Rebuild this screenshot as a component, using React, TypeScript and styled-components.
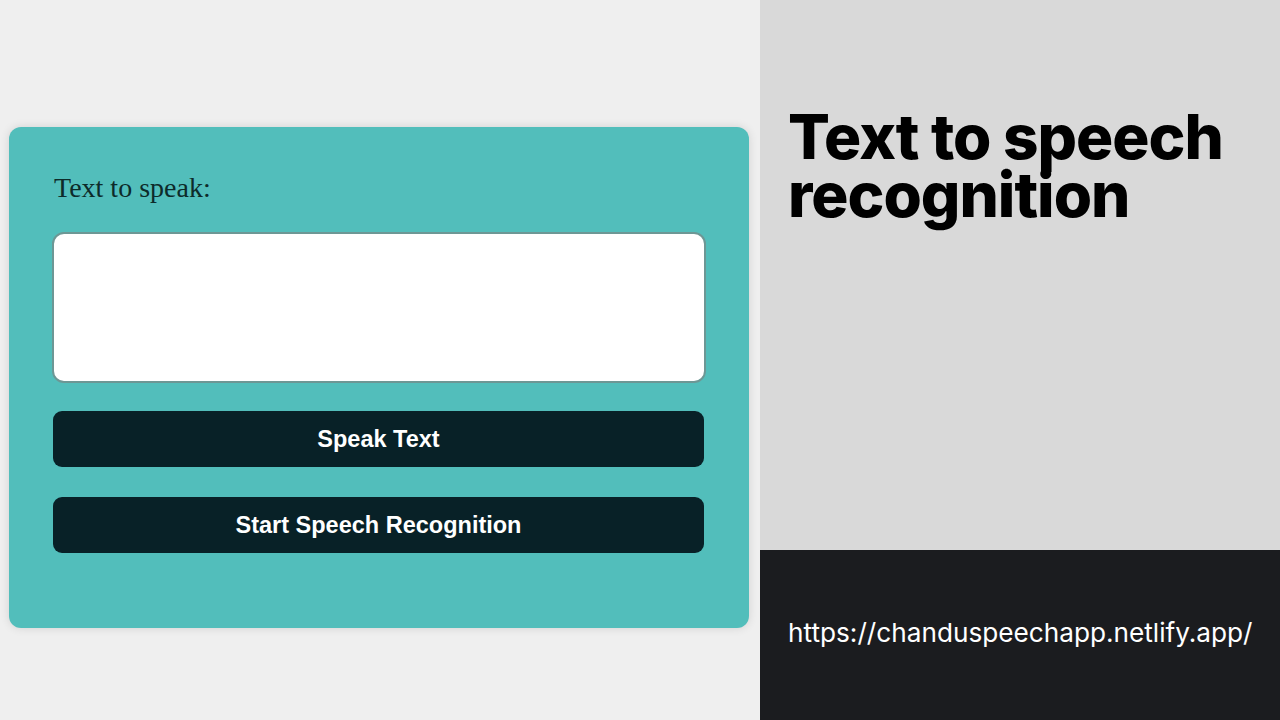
import React from "react";
import styled, { createGlobalStyle } from "styled-components";

const GlobalStyle = createGlobalStyle`
  html, body {
    margin: 0;
    padding: 0;
  }
  body {
    width: 1280px;
    height: 720px;
    overflow: hidden;
  }
`;

const Page = styled.div`
  display: flex;
  width: 1280px;
  height: 720px;
`;

const LeftPane = styled.div`
  width: 760px;
  height: 720px;
  background: #efefef;
  padding: 127px 0 0 9px;
  box-sizing: border-box;
`;

const Card = styled.div`
  width: 740px;
  height: 501px;
  box-sizing: border-box;
  background: #52bebb;
  border-radius: 12px;
  box-shadow: 0 0 10px rgba(0, 0, 0, 0.12);
  padding: 45px 43px 0 43px;
  display: flex;
  flex-direction: column;
`;

const Label = styled.label`
  font-family: "Liberation Serif", "Times New Roman", serif;
  font-size: 28px;
  line-height: 32px;
  color: #0d2b2a;
  padding-left: 2px;
`;

const TextArea = styled.textarea`
  margin-top: 28px;
  width: 654px;
  height: 151px;
  box-sizing: border-box;
  border: 2px solid #6d9795;
  border-radius: 12px;
  background: #ffffff;
  resize: none;
  outline: none;
`;

const Button = styled.button<{ $gap: number }>`
  margin: ${(p) => p.$gap}px 0 0 1px;
  width: 651px;
  height: 56px;
  border: none;
  border-radius: 9px;
  background: #082127;
  color: #ffffff;
  font-family: "Liberation Sans", Arial, sans-serif;
  font-weight: 700;
  font-size: 23.5px;
  cursor: pointer;
`;

const RightPane = styled.div`
  width: 520px;
  height: 720px;
  display: flex;
  flex-direction: column;
`;

const TitleBlock = styled.div`
  flex: 1;
  background: #d9d9d9;
  padding: 108px 0 0 28px;
  box-sizing: border-box;
`;

const Title = styled.h1`
  margin: 0;
  font-family: Inter, "Liberation Sans", sans-serif;
  font-weight: 800;
  font-size: 62px;
  line-height: 58px;
  letter-spacing: -1px;
  color: #000000;
`;

const LinkBlock = styled.div`
  height: 170px;
  background: #1b1c1f;
  display: flex;
  align-items: center;
  padding: 0 0 0 28px;
  box-sizing: border-box;
`;

const LinkText = styled.span`
  font-family: Inter, "Liberation Sans", sans-serif;
  font-weight: 400;
  font-size: 26.2px;
  color: #ffffff;
  margin-top: -6px;
`;

function App(): React.ReactElement {
  return (
    <>
      <GlobalStyle />
      <Page>
        <LeftPane>
          <Card>
            <Label htmlFor="speech-text">Text to speak:</Label>
            <TextArea id="speech-text" />
            <Button $gap={28}>Speak Text</Button>
            <Button $gap={30}>Start Speech Recognition</Button>
          </Card>
        </LeftPane>
        <RightPane>
          <TitleBlock>
            <Title>
              Text to speech
              <br />
              recognition
            </Title>
          </TitleBlock>
          <LinkBlock>
            <LinkText>https://chanduspeechapp.netlify.app/</LinkText>
          </LinkBlock>
        </RightPane>
      </Page>
    </>
  );
}

export default App;
